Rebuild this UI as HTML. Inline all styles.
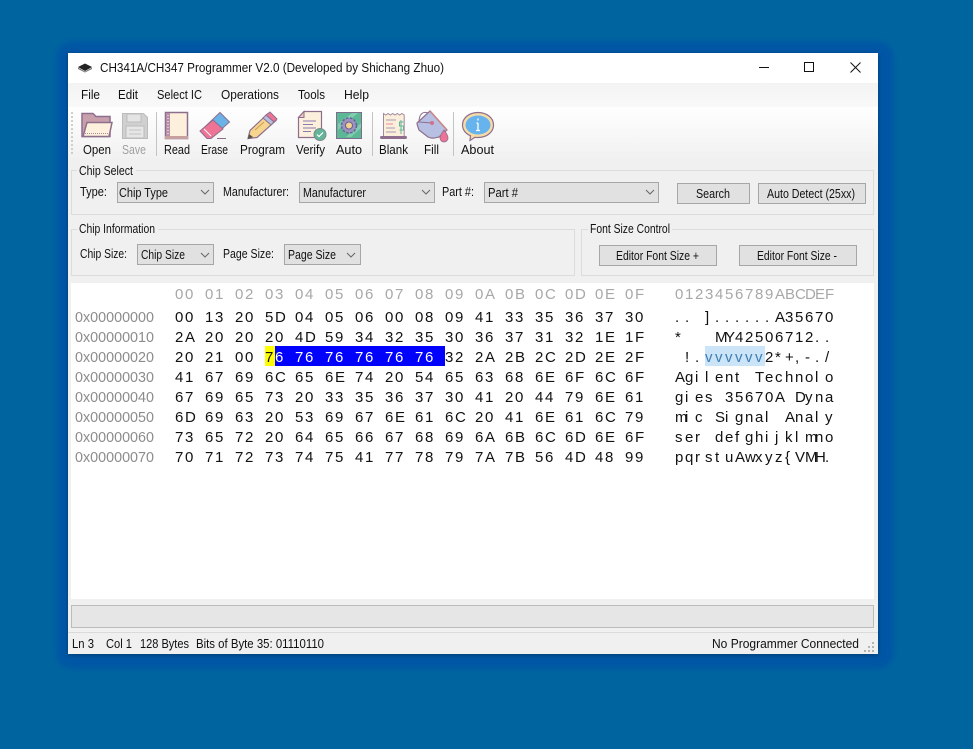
<!DOCTYPE html>
<html lang="en">
<head>
<meta charset="utf-8">
<title>CH341A/CH347 Programmer V2.0</title>
<style>
html,body{margin:0;padding:0;width:973px;height:749px;overflow:hidden;background:#00649f}
svg{display:block}
text{font-family:"Liberation Sans",Arial,sans-serif;font-size:12.5px;fill:#111;white-space:pre}
.g{fill:#a0a0a0}
.hex{font-size:15px;fill:#111}
.hd{font-size:15px;fill:#a8a8a8}
.ad{font-size:14.5px;fill:#8c8c8c}
</style>
</head>
<body>
<svg width="973" height="749" viewBox="0 0 973 749" xmlns="http://www.w3.org/2000/svg">
<defs>
<filter id="b1" x="-10%" y="-10%" width="120%" height="120%"><feGaussianBlur stdDeviation="3"/></filter>
<filter id="b2" x="-5%" y="-5%" width="110%" height="110%"><feGaussianBlur stdDeviation="2"/></filter>
<linearGradient id="tb" x1="0" y1="0" x2="0" y2="1"><stop offset="0" stop-color="#fff"/><stop offset="1" stop-color="#f0f0f0"/></linearGradient>
<linearGradient id="mn" x1="0" y1="0" x2="0" y2="1"><stop offset="0" stop-color="#f3f3f3"/><stop offset="1" stop-color="#f9f9f9"/></linearGradient>
</defs>
<rect width="973" height="749" fill="#00659f"/>
<rect x="56" y="41" width="838" height="628" rx="16" fill="#0056a4" filter="url(#b1)"/>
<rect x="68" y="54" width="810" height="601" fill="#003d70" filter="url(#b2)"/>

<!-- window -->
<rect x="68" y="53" width="810" height="601" fill="#f0f0f0"/>
<rect x="68" y="53" width="810" height="30" fill="#fff"/>
<rect x="68" y="83" width="810" height="24" fill="url(#mn)"/>
<rect x="68" y="107" width="810" height="55" fill="url(#tb)"/>

<!-- title bar -->
<path d="M78 67l7-3.500 7 3.500-7 4z" fill="#222"/><path d="M78 67.500l7 4 7-4v1.500l-7 3.500-7-3.500z" fill="#777"/>
<text x="100" y="72" textLength="344" lengthAdjust="spacingAndGlyphs">CH341A/CH347 Programmer V2.0 (Developed by Shichang Zhuo)</text>
<rect x="759" y="67" width="10" height="1" fill="#111"/>
<rect x="804.500" y="62.500" width="9" height="9" fill="none" stroke="#111"/>
<path d="M850.500 62.500l10 10M860.500 62.500l-10 10" stroke="#111" fill="none"/>

<!-- menu -->
<text x="81" y="99" textLength="19" lengthAdjust="spacingAndGlyphs">File</text>
<text x="118" y="99" textLength="20" lengthAdjust="spacingAndGlyphs">Edit</text>
<text x="157" y="99" textLength="45" lengthAdjust="spacingAndGlyphs">Select IC</text>
<text x="221" y="99" textLength="58" lengthAdjust="spacingAndGlyphs">Operations</text>
<text x="298" y="99" textLength="27" lengthAdjust="spacingAndGlyphs">Tools</text>
<text x="344" y="99" textLength="25" lengthAdjust="spacingAndGlyphs">Help</text>

<!-- toolbar grip and separators -->
<path d="M72 112V156" stroke="#cfcfcf" stroke-width="2" stroke-dasharray="2 2" fill="none"/>
<rect x="156" y="112" width="1" height="44" fill="#c4c4c4"/>
<rect x="372" y="112" width="1" height="44" fill="#c4c4c4"/>
<rect x="453" y="112" width="1" height="44" fill="#c4c4c4"/>

<!-- Open -->
<path d="M82 113.500h11l3 3h14v20H82z" fill="#c8a0ac" stroke="#8d6f8d" stroke-width="1.500"/>
<path d="M87 122.500h25l-3 14H83z" fill="#fdf0dc" stroke="#8d6f8d" stroke-width="1.500"/>
<path d="M85 133.500h23" stroke="#a58ba0" stroke-dasharray="1 1" fill="none"/>
<!-- Save -->
<path d="M122.500 113.500h21l4 4v21h-25z" fill="#d0d0d0" stroke="#bcbcbc"/>
<rect x="127" y="114" width="14" height="8" fill="#e4e4e4" stroke="#bcbcbc"/>
<rect x="126" y="126" width="18" height="12" fill="#e6e6e6" stroke="#bcbcbc"/>
<path d="M129 130h12M129 134h12" stroke="#c4c4c4" fill="none"/>
<!-- Read -->
<path d="M165.500 112.500h22v26h-22z" fill="#fcefdc" stroke="#8d6f8d" stroke-width="1.500"/>
<rect x="166" y="113" width="4" height="25" fill="#b890a8"/>
<path d="M168 115v20" stroke="#fff" stroke-dasharray="1 2" fill="none"/>
<rect x="165" y="136" width="23" height="3" fill="#c9a0a0"/>
<!-- Erase -->
<path d="M220 112.500l9.500 9.500-18 16h-4l-7-7z" fill="#69b3e9" stroke="#8d6f8d"/>
<path d="M213 120l10 9-12 9.500h-4l-7-7.500z" fill="#ee7394" stroke="#8d6f8d"/>
<path d="M204 129l7 7" stroke="#fff" fill="none"/>
<path d="M217 138.500h9" stroke="#8d6f8d" fill="none"/>
<!-- Program -->
<path d="M248 138.500l2-8 18-17 8 7-19 17z" fill="#f7d58e" stroke="#8d6f8d" stroke-width="1.200"/>
<path d="M266 115l8 7 3-3-7-7z" fill="#ee7394" stroke="#8d6f8d"/>
<path d="M263 118l8 7 3-3-8-7z" fill="#b6bfe0" stroke="#8d6f8d"/>
<path d="M248 139l1-5 4 3z" fill="#554"/>
<path d="M255 130l9-8" stroke="#c99c54" fill="none"/>
<!-- Verify -->
<path d="M304 111.500h17.500v26h-23v-20z" fill="#fcefdc" stroke="#8d6f8d" stroke-width="1.200"/>
<path d="M304 111.500v6h-5.500z" fill="#f0c8c0" stroke="#8d6f8d"/>
<path d="M303 121h13M303 124.500h10M303 128h13M303 131.500h8" stroke="#8a7bb0" fill="none"/>
<circle cx="320" cy="134.500" r="6" fill="#62b599" stroke="#7b8a8a"/>
<path d="M317 134.500l2 2 4-4" stroke="#fff" fill="none" stroke-width="1.200"/>
<!-- Auto -->
<rect x="336.500" y="112.500" width="25" height="26" fill="#5cb894" stroke="#7d6d8d"/>
<path d="M338 124l14-11h6l-20 17zM346 137l15-14v5l-10 9z" fill="#7fcdae"/>
<circle cx="349" cy="125.500" r="7.500" fill="#9a93bb" stroke="#65609a" stroke-width="1.500" stroke-dasharray="2.500 1.500"/>
<circle cx="349" cy="125.500" r="3.500" fill="#f3d28c" stroke="#65609a"/>
<!-- Blank -->
<path d="M383.500 113.500l2.300 1.500 2.300-1.500 2.300 1.500 2.300-1.500 2.300 1.500 2.300-1.500 2.300 1.500 2.300-1.500 2.300 1.500v22h-20.700z" fill="#fbeedb" stroke="#a08a9c"/>
<path d="M386 120h10M386 128h9M386 132h10" stroke="#a79cb4" fill="none"/>
<path d="M386 124h7" stroke="#ee8a9c" fill="none"/>
<path d="M401 120v14M403.500 122h-4v4h4v4h-4" stroke="#62b599" fill="none"/>
<rect x="380" y="136" width="27" height="3" rx="1.500" fill="#8d6f8d"/>
<!-- Fill -->
<path d="M417 123l13-12 17 19-8 7c-4 1-7 2-11 0l-9-7c-1-3-2-5-2-7z" fill="#b7bfe2" stroke="#8d6f8d" stroke-width="1.200"/>
<path d="M430 111l17 19" stroke="#c98585" stroke-width="1.500" fill="none"/>
<path d="M419 122c0-8 4-11 9-9M419 122l13 1" stroke="#8d6f8d" fill="none"/>
<circle cx="432" cy="123" r="2" fill="#d0708c"/>
<path d="M444 130c2 3 4 5 4 8a4 4 0 0 1-8 0c0-3 2-5 4-8z" fill="#ee7394" stroke="#8d6f8d" stroke-width=".8"/>
<!-- About -->
<path d="M478 112.500c9 0 15.500 5.500 15.500 12.500s-6.500 12.500-15.500 12.500c-1 0-2 0-3-.2l-5 3.200 .5-4.800c-5-2-8-6-8-10.700 0-7 6.500-12.500 15.500-12.500z" fill="#f6dca4" stroke="#8d6f8d" stroke-width="1.200"/>
<ellipse cx="478" cy="125" rx="12.500" ry="9.500" fill="#66b3ee"/>
<path d="M478 118.500v2M478 123v7M476 130.500h4M476.500 123h1.500" stroke="#fff" stroke-width="1.300" fill="none"/>

<!-- toolbar labels -->
<text x="83" y="154" textLength="28" lengthAdjust="spacingAndGlyphs">Open</text>
<text x="122" y="154" textLength="24" lengthAdjust="spacingAndGlyphs" class="g">Save</text>
<text x="164" y="154" textLength="26" lengthAdjust="spacingAndGlyphs">Read</text>
<text x="201" y="154" textLength="27" lengthAdjust="spacingAndGlyphs">Erase</text>
<text x="240" y="154" textLength="45" lengthAdjust="spacingAndGlyphs">Program</text>
<text x="296" y="154" textLength="29" lengthAdjust="spacingAndGlyphs">Verify</text>
<text x="336" y="154" textLength="26" lengthAdjust="spacingAndGlyphs">Auto</text>
<text x="379" y="154" textLength="29" lengthAdjust="spacingAndGlyphs">Blank</text>
<text x="424" y="154" textLength="15" lengthAdjust="spacingAndGlyphs">Fill</text>
<text x="461" y="154" textLength="33" lengthAdjust="spacingAndGlyphs">About</text>

<!-- group boxes -->
<rect x="71.500" y="170.500" width="802" height="44" fill="none" stroke="#dcdcdc"/>
<rect x="71.500" y="229.500" width="503" height="46" fill="none" stroke="#dcdcdc"/>
<rect x="581.500" y="229.500" width="292" height="46" fill="none" stroke="#dcdcdc"/>
<rect x="77" y="168" width="59" height="5" fill="#f0f0f0"/>
<rect x="77" y="227" width="81" height="5" fill="#f0f0f0"/>
<rect x="588" y="227" width="84" height="5" fill="#f0f0f0"/>
<text x="79" y="175" textLength="54" lengthAdjust="spacingAndGlyphs">Chip Select</text>
<text x="79" y="233" textLength="76" lengthAdjust="spacingAndGlyphs">Chip Information</text>
<text x="590" y="233" textLength="80" lengthAdjust="spacingAndGlyphs">Font Size Control</text>

<!-- row 1 controls -->
<text x="80" y="196" textLength="27" lengthAdjust="spacingAndGlyphs">Type:</text>
<rect x="117.500" y="182.500" width="96" height="20" fill="#e1e1e1" stroke="#a6a6a6"/>
<text x="119" y="197" textLength="49" lengthAdjust="spacingAndGlyphs">Chip Type</text>
<path d="M201 190l4 4 4-4" stroke="#666" fill="none"/>
<text x="223" y="196" textLength="66" lengthAdjust="spacingAndGlyphs">Manufacturer:</text>
<rect x="299.500" y="182.500" width="135" height="20" fill="#e1e1e1" stroke="#a6a6a6"/>
<text x="303" y="197" textLength="63" lengthAdjust="spacingAndGlyphs">Manufacturer</text>
<path d="M422 190l4 4 4-4" stroke="#666" fill="none"/>
<text x="442" y="196" textLength="32" lengthAdjust="spacingAndGlyphs">Part #:</text>
<rect x="484.500" y="182.500" width="174" height="20" fill="#e1e1e1" stroke="#a6a6a6"/>
<text x="488" y="197" textLength="30" lengthAdjust="spacingAndGlyphs">Part #</text>
<path d="M646 190l4 4 4-4" stroke="#666" fill="none"/>
<rect x="677.500" y="183.500" width="72" height="20" fill="#e1e1e1" stroke="#a6a6a6"/>
<text x="696" y="198" textLength="34" lengthAdjust="spacingAndGlyphs">Search</text>
<rect x="758.500" y="183.500" width="107" height="20" fill="#e1e1e1" stroke="#a6a6a6"/>
<text x="767" y="198" textLength="88" lengthAdjust="spacingAndGlyphs">Auto Detect (25xx)</text>

<!-- row 2 controls -->
<text x="80" y="258" textLength="47" lengthAdjust="spacingAndGlyphs">Chip Size:</text>
<rect x="137.500" y="244.500" width="76" height="20" fill="#e1e1e1" stroke="#a6a6a6"/>
<text x="141" y="259" textLength="44" lengthAdjust="spacingAndGlyphs">Chip Size</text>
<path d="M201 253l4 4 4-4" stroke="#666" fill="none"/>
<text x="223" y="258" textLength="51" lengthAdjust="spacingAndGlyphs">Page Size:</text>
<rect x="284.500" y="244.500" width="76" height="20" fill="#e1e1e1" stroke="#a6a6a6"/>
<text x="288" y="259" textLength="48" lengthAdjust="spacingAndGlyphs">Page Size</text>
<path d="M347 253l4 4 4-4" stroke="#666" fill="none"/>
<rect x="599.500" y="245.500" width="117" height="20" fill="#e1e1e1" stroke="#a6a6a6"/>
<text x="616" y="260" textLength="83" lengthAdjust="spacingAndGlyphs">Editor Font Size +</text>
<rect x="739.500" y="245.500" width="117" height="20" fill="#e1e1e1" stroke="#a6a6a6"/>
<text x="757" y="260" textLength="80" lengthAdjust="spacingAndGlyphs">Editor Font Size -</text>

<!-- editor -->
<rect x="71" y="283" width="803" height="316" fill="#fff"/>
<rect x="265" y="346" width="10" height="20" fill="#ffff00"/>
<rect x="275" y="346" width="170" height="20" fill="#0000ff"/>
<rect x="705" y="346" width="60" height="20" fill="#cce4f7"/>

<text class="hd" y="299" x="175 185 195 205 215 225 235 245 255 265 275 285 295 305 315 325 335 345 355 365 375 385 395 405 415 425 435 445 455 465 475 485 495 505 515 525 535 545 555 565 575 585 595 605 615 625 635">00 01 02 03 04 05 06 07 08 09 0A 0B 0C 0D 0E 0F</text>
<text class="hd" y="299" x="675 685 695 705 715 725 735 745 755 765 775 785 795 805 815 825">0123456789ABCDEF</text>

<text class="ad" x="75" y="322" textLength="79" lengthAdjust="spacingAndGlyphs">0x00000000</text>
<text class="ad" x="75" y="342" textLength="79" lengthAdjust="spacingAndGlyphs">0x00000010</text>
<text class="ad" x="75" y="362" textLength="79" lengthAdjust="spacingAndGlyphs">0x00000020</text>
<text class="ad" x="75" y="382" textLength="79" lengthAdjust="spacingAndGlyphs">0x00000030</text>
<text class="ad" x="75" y="402" textLength="79" lengthAdjust="spacingAndGlyphs">0x00000040</text>
<text class="ad" x="75" y="422" textLength="79" lengthAdjust="spacingAndGlyphs">0x00000050</text>
<text class="ad" x="75" y="442" textLength="79" lengthAdjust="spacingAndGlyphs">0x00000060</text>
<text class="ad" x="75" y="462" textLength="79" lengthAdjust="spacingAndGlyphs">0x00000070</text>

<text class="hex" y="322" x="175 185 195 205 215 225 235 245 255 265 275 285 295 305 315 325 335 345 355 365 375 385 395 405 415 425 435 445 455 465 475 485 495 505 515 525 535 545 555 565 575 585 595 605 615 625 635">00 13 20 5D 04 05 06 00 08 09 41 33 35 36 37 30</text>
<text class="hex" y="342" x="175 185 195 205 215 225 235 245 255 265 275 285 295 305 315 325 335 345 355 365 375 385 395 405 415 425 435 445 455 465 475 485 495 505 515 525 535 545 555 565 575 585 595 605 615 625 635">2A 20 20 20 4D 59 34 32 35 30 36 37 31 32 1E 1F</text>
<text class="hex" y="362" x="175 185 195 205 215 225 235 245 255 265 275 285 295 305 315 325 335 345 355 365 375 385 395 405 415 425 435 445 455 465 475 485 495 505 515 525 535 545 555 565 575 585 595 605 615 625 635">20 21 00 7<tspan style="fill:#fff">6 76 76 76 76 76 </tspan>32 2A 2B 2C 2D 2E 2F</text>
<text class="hex" y="382" x="175 185 195 205 215 225 235 245 255 265 275 285 295 305 315 325 335 345 355 365 375 385 395 405 415 425 435 445 455 465 475 485 495 505 515 525 535 545 555 565 575 585 595 605 615 625 635">41 67 69 6C 65 6E 74 20 54 65 63 68 6E 6F 6C 6F</text>
<text class="hex" y="402" x="175 185 195 205 215 225 235 245 255 265 275 285 295 305 315 325 335 345 355 365 375 385 395 405 415 425 435 445 455 465 475 485 495 505 515 525 535 545 555 565 575 585 595 605 615 625 635">67 69 65 73 20 33 35 36 37 30 41 20 44 79 6E 61</text>
<text class="hex" y="422" x="175 185 195 205 215 225 235 245 255 265 275 285 295 305 315 325 335 345 355 365 375 385 395 405 415 425 435 445 455 465 475 485 495 505 515 525 535 545 555 565 575 585 595 605 615 625 635">6D 69 63 20 53 69 67 6E 61 6C 20 41 6E 61 6C 79</text>
<text class="hex" y="442" x="175 185 195 205 215 225 235 245 255 265 275 285 295 305 315 325 335 345 355 365 375 385 395 405 415 425 435 445 455 465 475 485 495 505 515 525 535 545 555 565 575 585 595 605 615 625 635">73 65 72 20 64 65 66 67 68 69 6A 6B 6C 6D 6E 6F</text>
<text class="hex" y="462" x="175 185 195 205 215 225 235 245 255 265 275 285 295 305 315 325 335 345 355 365 375 385 395 405 415 425 435 445 455 465 475 485 495 505 515 525 535 545 555 565 575 585 595 605 615 625 635">70 71 72 73 74 75 41 77 78 79 7A 7B 56 4D 48 99</text>

<text class="hex" y="322" x="675 685 695 705 715 725 735 745 755 765 775 785 795 805 815 825">.. ]......A35670</text>
<text class="hex" y="342" x="675 685 695 705 715 725 735 745 755 765 775 785 795 805 815 825">*   MY42506712..</text>
<text class="hex" y="362" x="675 685 695 705 715 725 735 745 755 765 775 785 795 805 815 825"> !.<tspan style="fill:#3b7db3">vvvvvv</tspan>2*+,-./</text>
<text class="hex" y="382" x="675 685 695 705 715 725 735 745 755 765 775 785 795 805 815 825">Agilent Technolo</text>
<text class="hex" y="402" x="675 685 695 705 715 725 735 745 755 765 775 785 795 805 815 825">gies 35670A Dyna</text>
<text class="hex" y="422" x="675 685 695 705 715 725 735 745 755 765 775 785 795 805 815 825">mic Signal Analy</text>
<text class="hex" y="442" x="675 685 695 705 715 725 735 745 755 765 775 785 795 805 815 825">ser defghijklmno</text>
<text class="hex" y="462" x="675 685 695 705 715 725 735 745 755 765 775 785 795 805 815 825">pqrstuAwxyz{VMH.</text>

<!-- progress -->
<rect x="71.500" y="605.500" width="802" height="22" fill="#e6e6e6" stroke="#bcbcbc"/>
<rect x="68" y="632" width="810" height="1" fill="#dadada"/>

<!-- status bar -->
<text x="72" y="648" textLength="22" lengthAdjust="spacingAndGlyphs">Ln 3</text>
<text x="106" y="648" textLength="26" lengthAdjust="spacingAndGlyphs">Col 1</text>
<text x="140" y="648" textLength="49" lengthAdjust="spacingAndGlyphs">128 Bytes</text>
<text x="196" y="648" textLength="128" lengthAdjust="spacingAndGlyphs">Bits of Byte 35: 01110110</text>
<text x="712" y="648" textLength="147" lengthAdjust="spacingAndGlyphs">No Programmer Connected</text>
<path d="M872 642h2v2h-2zM868 646h2v2h-2zM872 646h2v2h-2zM864 650h2v2h-2zM868 650h2v2h-2zM872 650h2v2h-2z" fill="#b4b4b4"/>
</svg>
</body>
</html>
